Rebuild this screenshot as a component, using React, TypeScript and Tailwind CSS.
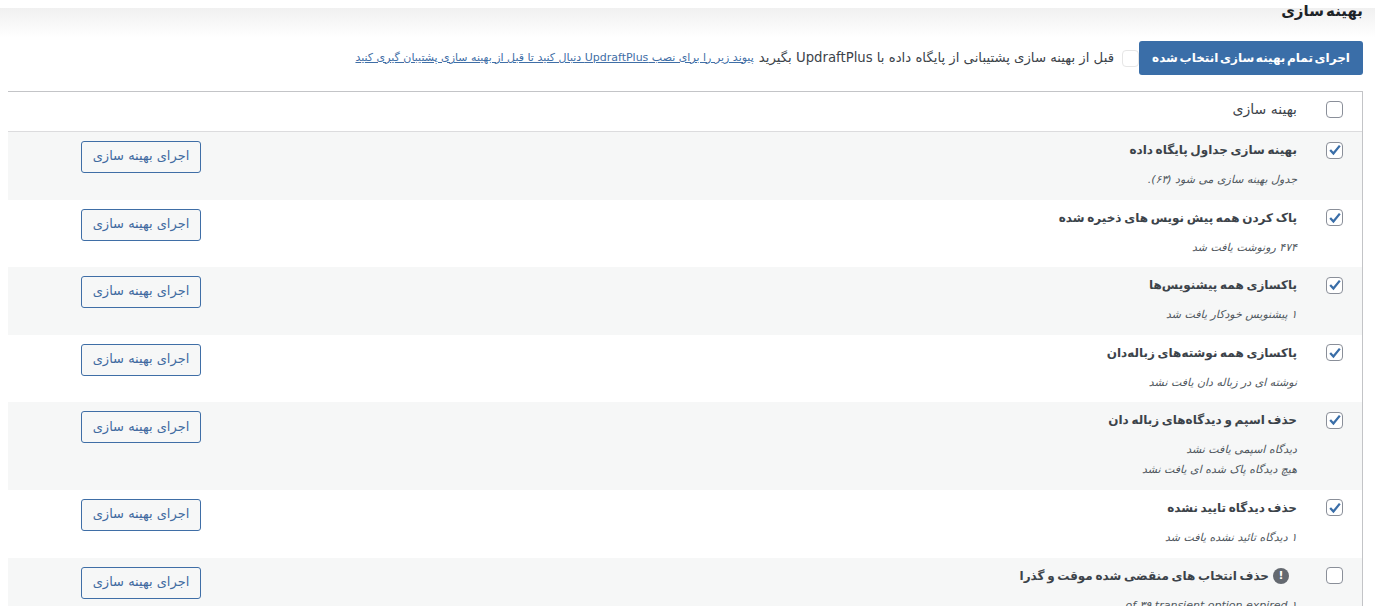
const FONT = "font-['DejaVu_Sans',sans-serif]";

const rows = [
  { title: "بهینه سازی جداول پایگاه داده", notes: ["جدول بهینه سازی می شود (۶۳)."], checked: true },
  { title: "پاک کردن همه پیش نویس های ذخیره شده", notes: ["۴۷۴ رونوشت یافت شد"], checked: true },
  { title: "پاکسازی همه پیشنویس‌ها", notes: ["۱ پیشنویس خودکار یافت شد"], checked: true },
  { title: "پاکسازی همه نوشته‌های زباله‌دان", notes: ["نوشته ای در زباله دان یافت نشد"], checked: true },
  { title: "حذف اسپم و دیدگاه‌های زباله دان", notes: ["دیدگاه اسپمی یافت نشد", "هیچ دیدگاه پاک شده ای یافت نشد"], checked: true },
  { title: "حذف دیدگاه تایید نشده", notes: ["۱ دیدگاه تائید نشده یافت شد"], checked: true },
  { title: "حذف انتخاب های منقضی شده موقت و گذرا", notes: ["of ۳۹ transient option expired ۱"], checked: false, warn: true },
];

function Box({ checked }: { checked: boolean }) {
  return (
    <span className="flex h-[17px] w-[17px] shrink-0 items-center justify-center rounded-[4px] border border-[#8a8f99] bg-white">
      {checked ? (
        <svg viewBox="0 0 16 16" className="h-[14px] w-[14px]">
          <path d="M2.5 8 L6.2 12 L13.5 3" fill="none" stroke="#3a6ea8" strokeWidth="2.6" />
        </svg>
      ) : null}
    </span>
  );
}

function Row({ row, odd }: { row: (typeof rows)[number]; odd: boolean }) {
  return (
    <div className={`flex items-start pr-[19px] pl-[73px] pt-[9px] pb-[9.6px] ${odd ? "bg-[#f6f7f7]" : "bg-white"}`}>
      <div className="flex h-[18px] w-[46px] shrink-0 items-center">
        <Box checked={row.checked} />
      </div>
      <div className="flex-1">
        <div
          className={`flex h-[18px] items-center gap-[4px] text-[12px] leading-[18px] font-bold text-[#3c434a] [word-spacing:-1.5px] ${row.warn ? "mr-[8px]" : ""}`}
        >
          {row.warn ? (
            <span className="flex h-[16px] w-[16px] items-center justify-center rounded-full bg-[#646970] text-[11px] font-bold text-white">!</span>
          ) : null}
          <span>{row.title}</span>
        </div>
        <div className="mt-[11px] text-[11px] italic leading-[20px] text-[#50575e]">
          {row.notes.map((n) => (
            <p key={n}>{n}</p>
          ))}
        </div>
      </div>
      <button className="h-[32px] w-[120px] shrink-0 rounded-[3px] border border-[#3f6ea6] bg-[#f6f7f7] pb-[2px] text-[13px] text-[#3f6a9f]">
        اجرای بهینه سازی
      </button>
    </div>
  );
}

export default function App() {
  return (
    <div dir="rtl" className={`h-[606px] w-[1390px] overflow-hidden bg-white ${FONT}`}>
      <div className="h-[8px]" />
      <div className="mr-[15px] bg-gradient-to-b from-[#f0f0f0] to-white to-[30px]">
        <div className="pr-[12px] pl-[8px]">
          <h2 className="h-[33px] text-[15px] leading-[7px] font-bold text-[#1d2327] [word-spacing:-3px]">بهینه سازی</h2>
          <div className="flex h-[34px] items-center">
            <button className="h-[34px] w-[224px] shrink-0 whitespace-nowrap rounded-[3px] bg-[#3a6ea8] text-[12px] font-bold text-white [word-spacing:-2.5px]">
              اجرای تمام بهینه سازی انتخاب شده
            </button>
            <span className="h-[17px] w-[17px] shrink-0 rounded-[4px] border border-[#e6e6e6] bg-white" />
            <span className="mr-2 whitespace-nowrap text-[13.25px] text-[#3c434a]">قبل از بهینه سازی پشتیبانی از پایگاه داده با UpdraftPlus بگیرید</span>
            <a className="mr-[5px] whitespace-nowrap text-[11px] text-[#3f6ea6] underline">پیوند زیر را برای نصب UpdraftPlus دنبال کنید تا قبل از بهینه سازی پشتیبان گیری کنید</a>
          </div>
          <div className="mt-[16px] border-t border-r border-[#c3c4c7]">
            <div className="flex h-[40px] items-center border-b border-[#dcdcde] pr-[19px] pb-[4px]">
              <div className="w-[46px]">
                <Box checked={false} />
              </div>
              <span className="text-[14px] text-[#3c434a]">بهینه سازی</span>
            </div>
            {rows.map((row, i) => (
              <Row key={row.title} row={row} odd={i % 2 === 0} />
            ))}
          </div>
        </div>
      </div>
    </div>
  );
}
